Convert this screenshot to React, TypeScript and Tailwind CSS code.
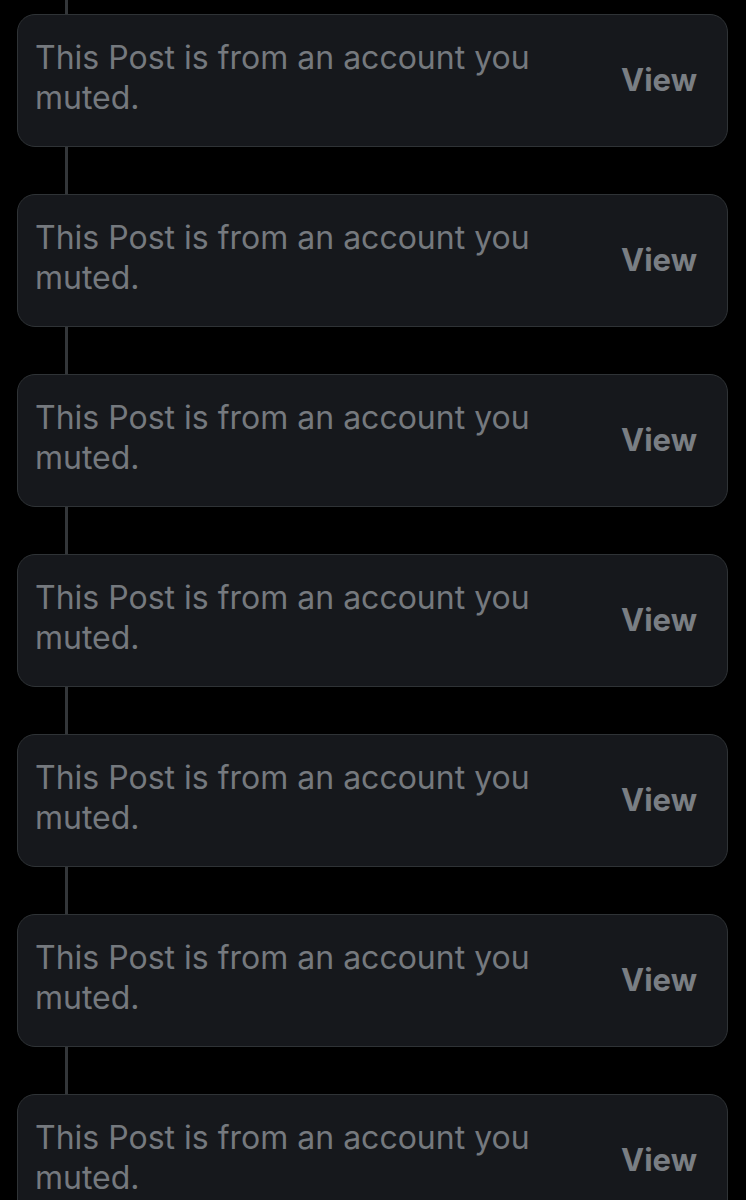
import React from 'react';

const POSTS = Array.from({ length: 7 }, (_, i) => i);

function Connector({ height }: { height: string }) {
  return (
    <div className={`${height} pl-[48px]`}>
      <div className="h-full w-[3px] bg-[#333639]" />
    </div>
  );
}

function MutedCard() {
  return (
    <div className="flex h-[133px] items-center justify-between rounded-[18px] border border-[#2f3336] bg-[#16181c] pl-[17px] pr-[30px]">
      <p className="mb-[6px] w-[540px] text-[32px] leading-[40px] text-[#75797e]">
        This Post is from an account you muted.
      </p>
      <button className="text-[31px] font-bold text-[#7a7e83]">View</button>
    </div>
  );
}

export default function App() {
  return (
    <div
      className="h-[1200px] w-[746px] overflow-hidden bg-black pl-[17px] pr-[18px]"
      style={{ fontFamily: 'Inter, "Noto Sans", sans-serif' }}
    >
      <Connector height="h-[14px]" />
      {POSTS.map((i) => (
        <React.Fragment key={i}>
          <MutedCard />
          <Connector height="h-[47px]" />
        </React.Fragment>
      ))}
    </div>
  );
}
